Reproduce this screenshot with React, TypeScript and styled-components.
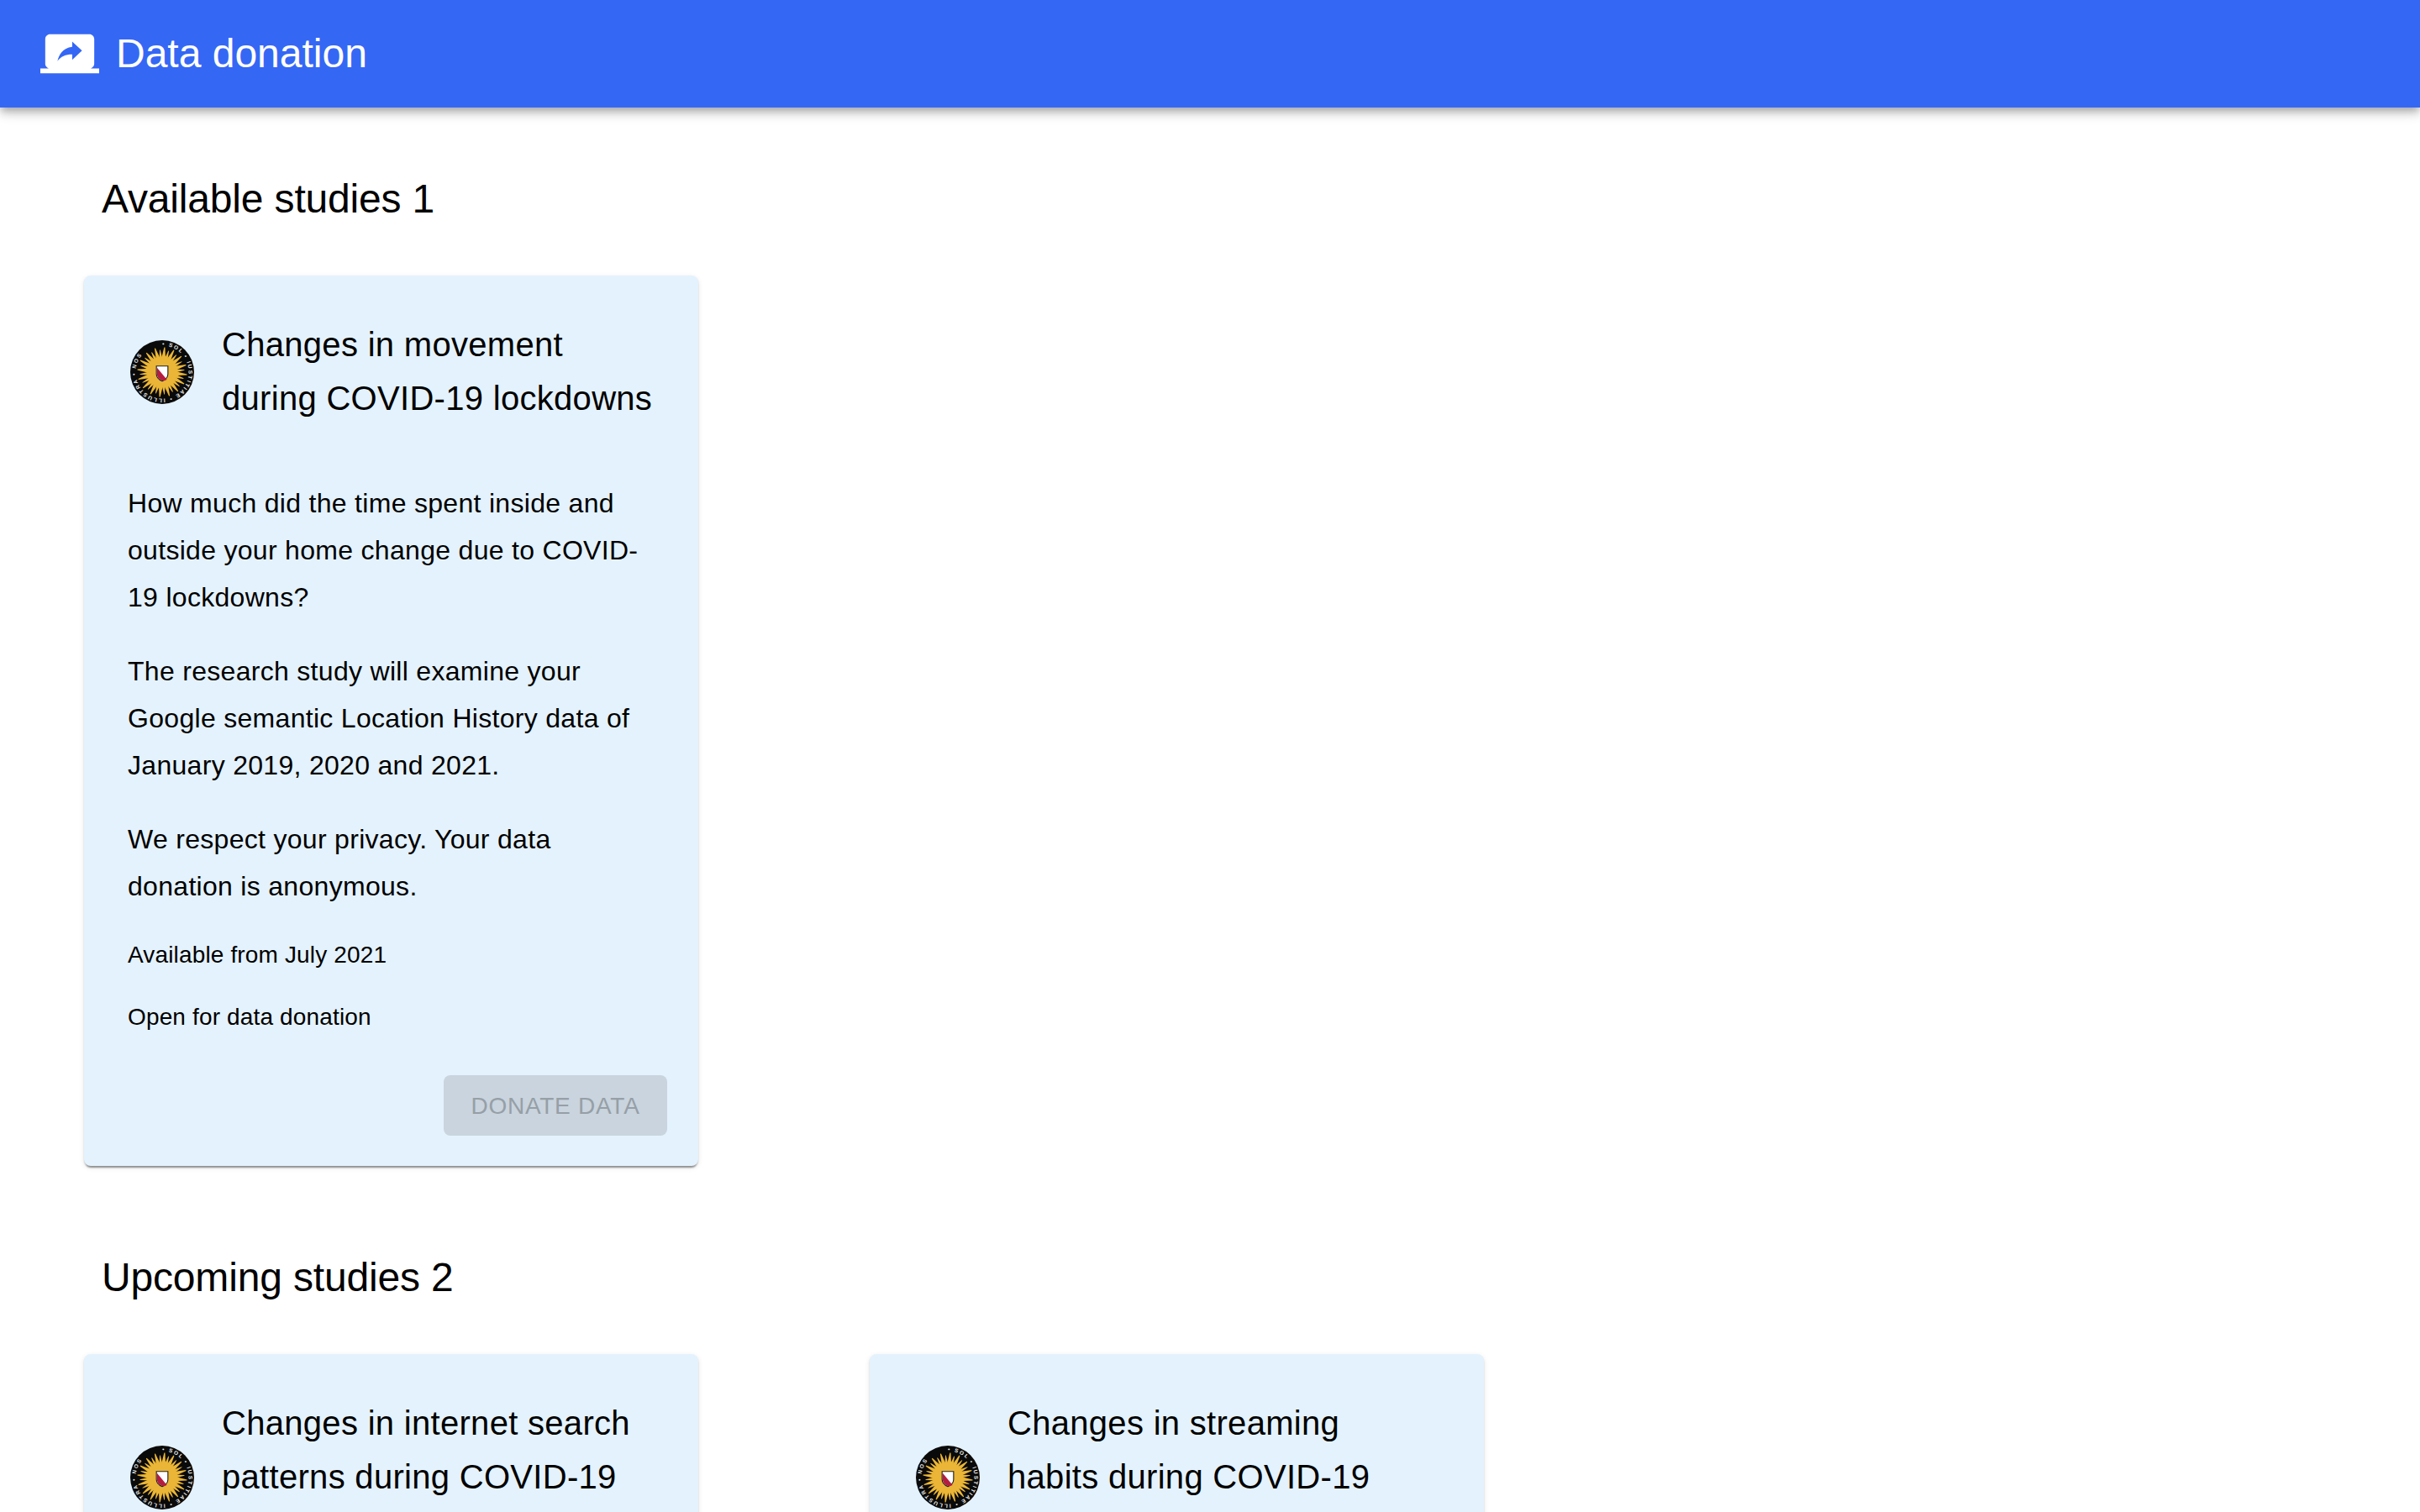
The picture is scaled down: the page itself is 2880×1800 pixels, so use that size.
import React from "react";
import styled, { createGlobalStyle } from "styled-components";

const Global = createGlobalStyle`
  html, body { margin: 0; padding: 0; background: #fff; height: 100%; overflow: hidden; }
  body { font-family: "Liberation Sans", Arial, Helvetica, sans-serif; color: #000; }
  #root { height: 100vh; overflow: hidden; }
`;

const AppBar = styled.header`
  position: relative;
  z-index: 2;
  height: 128px;
  padding: 0 48px;
  display: flex;
  align-items: center;
  gap: 20px;
  background: #3567f5;
  color: #fff;
  box-shadow: 0 4px 8px -2px rgba(0,0,0,.2), 0 8px 10px 0 rgba(0,0,0,.14), 0 2px 20px 0 rgba(0,0,0,.12);
`;

const AppTitle = styled.h1`
  margin: 0;
  font-size: 48px;
  font-weight: 400;
  line-height: 64px;
`;

const Main = styled.main`
  padding: 77px 0 0 100px;
`;

const Section = styled.section`
  margin-bottom: 101px;
`;

const SectionTitle = styled.h2`
  margin: 0 0 59px 21px;
  font-size: 48px;
  font-weight: 400;
  line-height: 64px;
  letter-spacing: -0.17px;
`;

const CardRow = styled.div`
  display: flex;
  gap: 204px;
  align-items: flex-start;
`;

const Card = styled.article`
  box-sizing: border-box;
  width: 731px;
  padding: 50px 37px 36px 52px;
  border-radius: 8px;
  background: #e4f2fd;
  box-shadow: 0 4px 2px -2px rgba(0,0,0,.3), 0 2px 2px 0 rgba(0,0,0,.14), 0 2px 6px 0 rgba(0,0,0,.1);
`;

const CardHead = styled.div`
  display: flex;
  align-items: center;
  gap: 33px;
  margin-bottom: 65px;
`;

const LogoBox = styled.svg`
  flex: 0 0 76px;
  width: 76px;
  height: 76px;
  margin: 2px 0 0 3px;
`;

const CardTitle = styled.h3`
  margin: 0;
  max-width: 513.5px;
  font-size: 40px;
  font-weight: 400;
  line-height: 64px;
  letter-spacing: 0.3px;
`;

const Body = styled.p`
  margin: 0 0 32px;
  max-width: 620px;
  font-size: 32px;
  line-height: 56px;
  letter-spacing: 0.3px;
`;

const NoteList = styled.div`
  display: flex;
  flex-direction: column;
  gap: 34px;
  padding-top: 2px;
`;

const Note = styled.p`
  margin: 0;
  font-size: 28px;
  line-height: 40px;
  letter-spacing: 0.15px;
`;

const Actions = styled.div`
  display: flex;
  justify-content: flex-end;
  margin-top: 49px;
`;

const DonateButton = styled.button`
  box-sizing: border-box;
  width: 266px;
  height: 72px;
  padding: 1px 0 0;
  border: 0;
  border-radius: 8px;
  background: #c9d4de;
  color: #969fa6;
  font-family: inherit;
  font-size: 28px;
  letter-spacing: 0.75px;
  text-transform: uppercase;
`;

function Logo({ id }: { id: string }) {
  const rays = Array.from({ length: 32 }, (_, i) => {
    const a = (i / 32) * Math.PI * 2 + Math.PI / 32;
    const long = i % 2 === 0;
    const r1 = long ? 39 : 35;
    const w = long ? 3.8 : 3;
    const t = long ? 0.7 : 0.5;
    const p = (r: number, o: number) =>
      `${(50 + r * Math.cos(a) - o * Math.sin(a)).toFixed(2)},${(50 + r * Math.sin(a) + o * Math.cos(a)).toFixed(2)}`;
    return <polygon key={i} points={`${p(18, -w)} ${p(r1, -t)} ${p(r1, t)} ${p(18, w)}`} fill="#ebb637" />;
  });
  return (
    <LogoBox viewBox="0 0 100 100">
      <circle cx="50" cy="50" r="50" fill="#0a0a0a" />
      {rays}
      <circle cx="50" cy="50" r="23" fill="#ebb637" />
      <path d="M41 40.500h18v12.500c0 6-4 9-9 11-5-2-9-5-9-11z" fill="#fff" stroke="#222" strokeWidth="1.500" />
      <path d="M42 43 57.500 62c-2 .9-5 1.800-7.500 1-5-1.800-8-5-8-10z" fill="#b51d3f" />
      <path id={id} d="M50 8.500a41.500 41.500 0 1 1-.01 0" fill="none" />
      <text fontFamily="Liberation Sans, sans-serif" fontSize="8.500" fontWeight="700" fill="#eee" letterSpacing="2.300">
        <textPath href={`#${id}`}>• SOL • IUSTITIAE • ILLUSTRA • NOS</textPath>
      </text>
    </LogoBox>
  );
}

function ShareIcon() {
  return (
    <svg width="70" height="70" viewBox="0 0 24 24" fill="#fff" style={{ flex: "0 0 70px" }}>
      <path d="M20 18c1.100 0 1.990-.9 1.990-2L22 6c0-1.110-.9-2-2-2H4c-1.110 0-2 .89-2 2v10c0 1.100.89 2 2 2H0v2h24v-2h-4zm-7-3.530v-2.190c-2.780 0-4.610.85-6 2.720.56-2.670 2.110-5.330 6-5.870V7l4 3.730-4 3.740z" />
    </svg>
  );
}

export default function App() {
  return (
    <>
      <Global />
      <AppBar>
        <ShareIcon />
        <AppTitle>Data donation</AppTitle>
      </AppBar>
      <Main>
        <Section>
          <SectionTitle>Available studies 1</SectionTitle>
          <CardRow>
            <Card>
              <CardHead>
                <Logo id="logo-a" />
                <CardTitle>Changes in movement during COVID-19 lockdowns</CardTitle>
              </CardHead>
              <Body>How much did the time spent inside and outside your home change due to COVID-19 lockdowns?</Body>
              <Body>The research study will examine your Google semantic Location History data of January 2019, 2020 and 2021.</Body>
              <Body>We respect your privacy. Your data donation is anonymous.</Body>
              <NoteList>
                <Note>Available from July 2021</Note>
                <Note>Open for data donation</Note>
              </NoteList>
              <Actions>
                <DonateButton disabled>Donate data</DonateButton>
              </Actions>
            </Card>
          </CardRow>
        </Section>
        <Section>
          <SectionTitle>Upcoming studies 2</SectionTitle>
          <CardRow>
            <Card>
              <CardHead>
                <Logo id="logo-b" />
                <CardTitle>Changes in internet search patterns during COVID-19 lockdowns</CardTitle>
              </CardHead>
            </Card>
            <Card>
              <CardHead>
                <Logo id="logo-c" />
                <CardTitle>Changes in streaming habits during COVID-19 lockdowns</CardTitle>
              </CardHead>
            </Card>
          </CardRow>
        </Section>
      </Main>
    </>
  );
}
